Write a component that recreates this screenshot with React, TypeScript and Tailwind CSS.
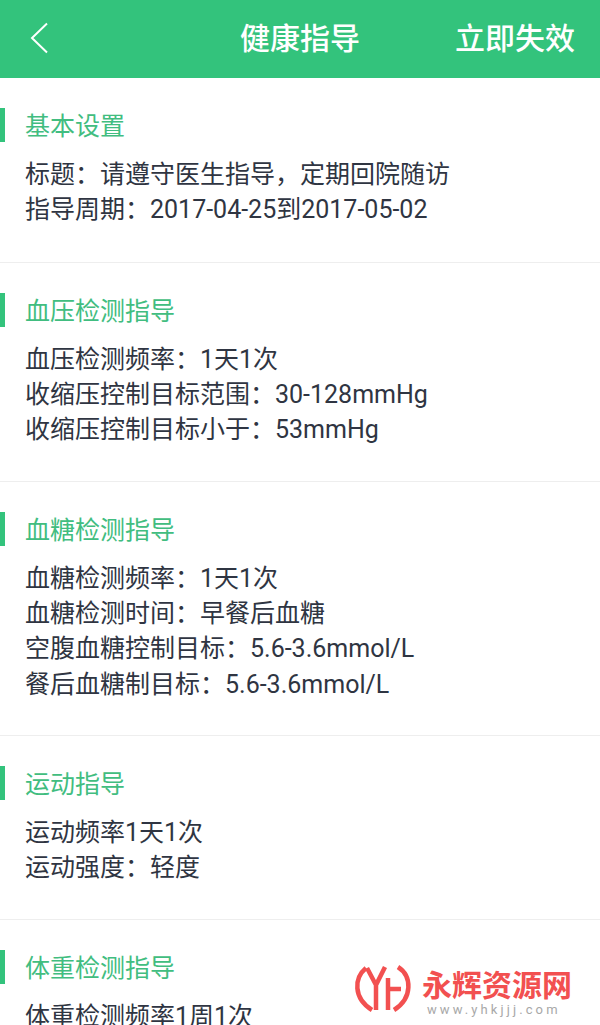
const sections = [
  { title: "基本设置", lines: ["标题：请遵守医生指导，定期回院随访", "指导周期：2017-04-25到2017-05-02"] },
  { title: "血压检测指导", lines: ["血压检测频率：1天1次", "收缩压控制目标范围：30-128mmHg", "收缩压控制目标小于：53mmHg"] },
  { title: "血糖检测指导", lines: ["血糖检测频率：1天1次", "血糖检测时间：早餐后血糖", "空腹血糖控制目标：5.6-3.6mmol/L", "餐后血糖制目标：5.6-3.6mmol/L"] },
  { title: "运动指导", lines: ["运动频率1天1次", "运动强度：轻度"] },
  { title: "体重检测指导", lines: ["体重检测频率1周1次"] },
];

const font = "font-['Roboto','Noto_Sans_CJK_SC',sans-serif]";

export default function App() {
  return (
    <div className={`relative h-[1025px] w-[600px] overflow-hidden bg-white ${font}`}>
      <header className="grid h-[78px] grid-cols-[1fr_auto_1fr] items-center bg-[#33c37c] px-[25px] text-white">
        <svg width="20" height="32" viewBox="0 0 20 32" fill="none" stroke="currentColor" strokeWidth="2" className="-mt-[2px] ml-[5px]">
          <path d="M17 1.5 L2 16 L17 30.5" />
        </svg>
        <h1 className="text-[30px] font-medium leading-none">健康指导</h1>
        <span className="justify-self-end text-[30px] font-medium leading-none">立即失效</span>
      </header>
      {sections.map((s) => (
        <section key={s.title} className="border-b border-[#eeeeee] pb-[33.1px] pt-[30px] first-of-type:pb-[34.1px] last:border-b-0">
          <h2 className="border-l-[5px] border-[#33c37c] pl-[20px] text-[25px] leading-[34px] text-[#41bd80]">
            <span className="relative top-[2px]">{s.title}</span>
          </h2>
          <div className="mt-[15px] pl-[25px] text-[25px] leading-[35.3px] text-[#2f3542]">
            {s.lines.map((l) => (
              <p key={l} className="whitespace-nowrap">{l}</p>
            ))}
          </div>
        </section>
      ))}
      <div className="absolute left-[350px] top-[960px] flex">
        <svg width="70" height="60" viewBox="0 0 70 60" fill="none" stroke="#f25050" strokeWidth="4.5" strokeLinecap="butt">
          <path d="M16 8 C4 18 3 38 22 50" />
          <path d="M17 8 L26 25 L26 50 M26 25 L35 7" />
          <path d="M48 7 C62 16 63 38 44 50" />
          <path d="M38 18 L38 50 M38 29 L51 29" />
        </svg>
        <div className="ml-[2px] flex flex-col items-start pt-[10px]">
          <span className="text-[30px] font-bold leading-[32px] text-[#f25050]">永辉资源网</span>
          <span className="ml-[5px] mt-[1px] text-[13px] leading-[14px] tracking-[3.1px] text-[#a8a8a8]">www.yhkjjj.com</span>
        </div>
      </div>
    </div>
  );
}
